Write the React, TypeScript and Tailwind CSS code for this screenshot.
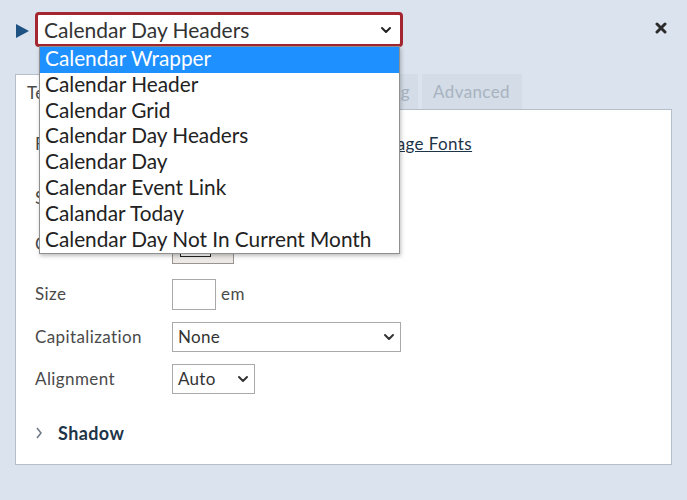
import React from "react"

const options = [
  "Calendar Wrapper",
  "Calendar Header",
  "Calendar Grid",
  "Calendar Day Headers",
  "Calendar Day",
  "Calendar Event Link",
  "Calandar Today",
  "Calendar Day Not In Current Month",
]

const tabs = [
  { label: "Text", w: "w-[70px]", active: true },
  { label: "Background", w: "w-[126px]" },
  { label: "Border", w: "w-[99px]" },
  { label: "Spacing", w: "w-[96px]" },
  { label: "Advanced", w: "w-[100px]" },
]

function Chevron({ className = "" }: { className?: string }) {
  return (
    <svg viewBox="0 0 12 8" className={className} fill="none" stroke="currentColor" strokeWidth="2" strokeLinecap="round" strokeLinejoin="round">
      <path d="M2 2l4 4 4-4" />
    </svg>
  )
}

function FakeSelect({ value, className }: { value: string; className: string }) {
  return (
    <div className={`flex items-center justify-between border border-[#a9a9a9] bg-white pl-[5px] pr-[5px] text-[17px] tracking-[0.3px] text-[#333] ${className}`}>
      <span>{value}</span>
      <Chevron className="h-[8px] w-[12px] text-[#333]" />
    </div>
  )
}

function Row({ label, className, children }: { label: string; className: string; children?: React.ReactNode }) {
  return (
    <div className={`flex items-center ${className}`}>
      <div className="w-[137px] shrink-0 text-[17px] tracking-[0.4px] text-[#4a4a4a]">{label}</div>
      {children}
    </div>
  )
}

export default function App() {
  return (
    <div
      className="relative h-[500px] w-[687px] overflow-hidden bg-[#dbe3ee]"
      style={{ fontFamily: "Lato, 'Open Sans', sans-serif" }}
    >
      {/* header */}
      <div className="flex h-[60px] items-start pl-[15px] pr-[20px] pt-[12px]">
        <svg viewBox="0 0 14 14" className="mt-[12px] h-[14px] w-[14px] shrink-0">
          <polygon points="1,0 14,7 1,14" fill="#1d5283" />
        </svg>
        <div className="relative ml-[6px]">
          <div className="flex h-[35px] w-[368px] items-center justify-between rounded-[4px] border-[3px] border-[#a42630] bg-white pl-[6px] pr-[8px]">
            <span className="text-[21px] text-[#333]">Calendar Day Headers</span>
            <Chevron className="h-[8px] w-[12px] text-[#222]" />
          </div>
          <div className="absolute left-[4px] top-[34px] z-20 w-[361px] border border-[#8f8f8f] bg-white shadow-[1px_2px_4px_rgba(0,0,0,0.25)]">
            {options.map((o, i) => (
              <div
                key={o}
                className={`flex h-[25.8px] items-center pb-[3px] pl-[5px] text-[20.8px] leading-none ${i === 0 ? "bg-[#1e90ff] text-white" : "text-[#222]"}`}
              >
                {o}
              </div>
            ))}
          </div>
        </div>
        <div className="ml-auto mt-[10px]">
          <svg viewBox="0 0 12 12" className="h-[12px] w-[12px]" stroke="#2b2b2b" strokeWidth="3" strokeLinecap="round">
            <path d="M2 2l8 8M10 2l-8 8" />
          </svg>
        </div>
      </div>

      {/* tabs */}
      <div className="mt-[14px] flex gap-[4px] pl-[15px]">
        {tabs.map((t) => (
          <div
            key={t.label}
            className={`flex h-[35px] items-center pl-[11px] text-[17px] tracking-[0.4px] ${t.w} ${
              t.active
                ? "relative z-10 -mb-px h-[36px] border border-b-0 border-[#b5bfca] bg-white text-[#4a4a4a]"
                : "bg-[#d3dce7] text-[#a8b3c0]"
            } ${t.label === "Spacing" ? "justify-end pr-[8px] text-[#4a4a4a]" : ""}`}
          >
            {t.label}
          </div>
        ))}
      </div>

      {/* panel */}
      <div className="mx-[15px] h-[356px] w-[657px] border border-[#b5bfca] bg-white pl-[19px] pt-[16px]">
        <Row label="Font" className="h-[36px]">
          <FakeSelect value="Default" className="h-[30px] w-[180px]" />
          <a className="ml-[10px] text-[17px] tracking-[0.4px] text-[#1e3448] underline">Manage Fonts</a>
        </Row>
        <Row label="Style" className="mt-[18px] h-[36px]">
          <div className="flex gap-[4px]">
            <div className="flex h-[28px] w-[28px] items-center justify-center border border-[#a9a9a9] font-bold">B</div>
            <div className="flex h-[28px] w-[28px] items-center justify-center border border-[#a9a9a9] italic">I</div>
          </div>
        </Row>
        <Row label="Color" className="mt-[8px] h-[40px]">
          <div className="mt-[2px] flex h-[38px] w-[62px] items-end border border-[#9a9490] bg-[#ece9e6] pb-[6px] pl-[7px]">
            <div className="relative h-[28px] w-[31px] overflow-hidden border border-[#222] bg-white">
              <div className="absolute bottom-[4px] left-[-2px] h-[2px] w-[40px] origin-left -rotate-[40deg] bg-[#c0182a]" />
            </div>
          </div>
        </Row>
        <Row label="Size" className="mt-[14px] h-[32px]">
          <div className="h-[31px] w-[44px] border border-[#a9a9a9]" />
          <span className="ml-[5px] text-[17px] tracking-[0.4px] text-[#4a4a4a]">em</span>
        </Row>
        <Row label="Capitalization" className="mt-[12px] h-[30px]">
          <FakeSelect value="None" className="h-[30px] w-[229px]" />
        </Row>
        <Row label="Alignment" className="mt-[12px] h-[30px]">
          <FakeSelect value="Auto" className="h-[30px] w-[83px]" />
        </Row>
        <div className="mt-[27px] flex h-[24px] items-center">
          <svg viewBox="0 0 8 12" className="h-[12px] w-[8px]" fill="none" stroke="#6b7785" strokeWidth="1.5">
            <path d="M2 1l4 5-4 5" />
          </svg>
          <span className="ml-[15px] text-[18px] font-bold tracking-[0.4px] text-[#1e3448]">Shadow</span>
        </div>
      </div>
    </div>
  )
}
